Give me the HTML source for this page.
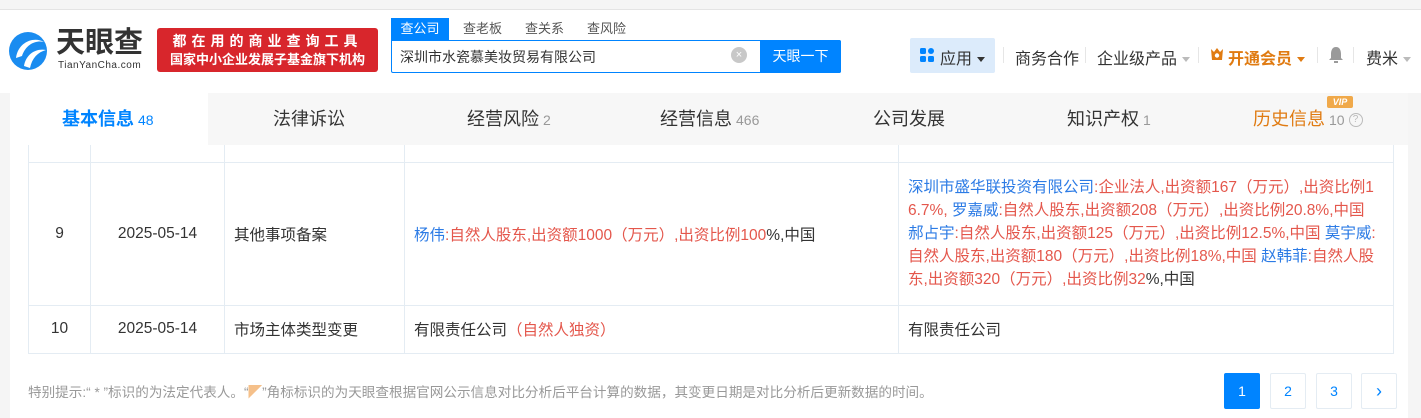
<!DOCTYPE html>
<html><head><meta charset="utf-8"><style>
*{margin:0;padding:0;box-sizing:border-box}
body{width:1421px;height:418px;overflow:hidden;background:#f5f5f5;font-family:"Liberation Sans","Noto Sans CJK SC",sans-serif;color:#333;position:relative}
.abs{position:absolute}
.hdr{left:0;top:9px;width:1421px;height:84px;background:#fff;border-top:1px solid #e4e4e4}
.card{left:10px;top:93px;width:1398px;height:325px;background:#fff}
.tabs{left:10px;top:93px;width:1398px;height:52px;background:#f7f7f7}
.tab{position:absolute;top:0;height:52px;line-height:52px;font-size:18px;color:#333;white-space:nowrap}
.tab small{font-size:14px;color:#999;margin-left:4px}
table{position:absolute;left:28px;top:145px;border-collapse:collapse;font-size:15.5px;color:#333}
td{border:1px solid #e4ecf3;vertical-align:middle}
.b{color:#2c7be5}
.r{color:#e4574c}
.pg{position:absolute;top:373px;width:36px;height:36px;border:1px solid #e4ecf3;border-radius:2px;text-align:center;line-height:34px;font-size:14px;color:#0084ff;background:#fff}
.nav{position:absolute;top:45px;font-size:16px;color:#333;white-space:nowrap}
.sep{position:absolute;top:47px;width:1px;height:16px;background:#e6e6e6}
.caret{display:inline-block;width:0;height:0;border-left:4px solid transparent;border-right:4px solid transparent;border-top:5px solid #999;vertical-align:middle;margin-left:5px}
</style></head><body>
<div class="abs hdr"></div>
<svg class="abs" style="left:8px;top:28px" width="42" height="46" viewBox="0 0 42 46">
<circle cx="20" cy="23" r="19" fill="#1a8cf0"/>
<path d="M8 30 C10 14 26 8 36 14 C28 12 18 16 14 28 Z" fill="#fff"/>
<path d="M16 38 C18 26 28 20 38 22 C30 24 24 30 22 40 Z" fill="#fff"/>
</svg>
<div class="abs" style="left:56px;top:27px;font-size:29px;font-weight:bold;color:#333;line-height:32px">天眼查</div>
<div class="abs" style="left:58px;top:60px;font-size:10px;color:#333;letter-spacing:.5px">TianYanCha.com</div>
<div class="abs" style="left:157px;top:28px;width:221px;height:44px;background:#d8262c;border-radius:3px;color:#fff;text-align:center">
<div style="font-size:14px;letter-spacing:5px;line-height:20px;margin-top:3px;font-weight:bold">都在用的商业查询工具</div>
<div style="font-size:13px;line-height:18px;font-weight:bold">国家中小企业发展子基金旗下机构</div></div>
<div class="abs" style="left:391px;top:18px;width:58px;height:22px;background:#0084ff;color:#fff;font-size:13px;text-align:center;line-height:22px">查公司</div>
<div class="abs" style="left:463px;top:18px;font-size:13px;color:#555;line-height:22px">查老板</div>
<div class="abs" style="left:525px;top:18px;font-size:13px;color:#555;line-height:22px">查关系</div>
<div class="abs" style="left:587px;top:18px;font-size:13px;color:#555;line-height:22px">查风险</div>
<div class="abs" style="left:391px;top:40px;width:450px;height:33px;border:1px solid #0084ff;background:#fff;border-radius:0 2px 2px 2px"></div>
<div class="abs" style="left:400px;top:47px;font-size:14px;color:#333">深圳市水瓷慕美妆贸易有限公司</div>
<div class="abs" style="left:731px;top:47px;width:16px;height:16px;border-radius:50%;background:#c8c8c8;color:#fff;font-size:11px;text-align:center;line-height:16px">×</div>
<div class="abs" style="left:760px;top:40px;width:81px;height:33px;background:#0084ff;color:#fff;font-size:14px;text-align:center;line-height:33px;border-radius:0 2px 2px 0">天眼一下</div>
<div class="abs" style="left:910px;top:38px;width:85px;height:35px;background:#dcebfb;border-radius:2px"></div>
<svg class="abs" style="left:920px;top:48px" width="14" height="14"><rect x="0" y="0" width="6" height="6" rx="1.5" fill="#0084ff"/><rect x="8" y="0" width="6" height="6" rx="3" fill="#0084ff"/><rect x="0" y="8" width="6" height="6" rx="1.5" fill="#0084ff"/><rect x="8" y="8" width="6" height="6" rx="1.5" fill="#0084ff"/></svg>
<div class="nav" style="left:940px">应用<span class="caret" style="border-top-color:#333"></span></div>
<div class="sep" style="left:1003px"></div>
<div class="nav" style="left:1015px">商务合作</div>
<div class="sep" style="left:1085px"></div>
<div class="nav" style="left:1097px">企业级产品<span class="caret" style="border-top-color:#bbb"></span></div>
<div class="sep" style="left:1198px"></div>
<svg class="abs" style="left:1210px;top:48px" width="14" height="13"><path d="M1 1 L4 4 L7 0 L10 4 L13 1 L12 12 L2 12 Z" fill="#e07b12"/><circle cx="7" cy="7.5" r="2.2" fill="#fff"/></svg>
<div class="nav" style="left:1228px;color:#e07b12;font-weight:bold">开通会员<span class="caret" style="border-top-color:#e07b12"></span></div>
<div class="sep" style="left:1317px"></div>
<svg class="abs" style="left:1329px;top:46px" width="14" height="18"><path d="M7 1 C3 1 2 5 2 8 L2 12 L0 14 L14 14 L12 12 L12 8 C12 5 11 1 7 1Z" fill="#9a9a9a"/><rect x="5" y="15" width="4" height="2" fill="#9a9a9a"/></svg>
<div class="sep" style="left:1353px"></div>
<div class="nav" style="left:1366px">费米<span class="caret" style="border-top-color:#bbb"></span></div>
<div class="abs card"></div>
<div class="abs tabs">
<div style="position:absolute;left:0;top:0;width:198px;height:52px;background:#fff"></div>
<div class="tab" style="left:52px;color:#0084ff;font-weight:bold">基本信息<small style="color:#0084ff;font-weight:normal">48</small></div>
<div class="tab" style="left:263px">法律诉讼</div>
<div class="tab" style="left:457px">经营风险<small>2</small></div>
<div class="tab" style="left:650px">经营信息<small>466</small></div>
<div class="tab" style="left:863px">公司发展</div>
<div class="tab" style="left:1057px">知识产权<small>1</small></div>
<div class="tab" style="left:1243px;color:#e07b12">历史信息<small>10</small><span style="display:inline-block;width:14px;height:14px;border:1px solid #bbb;border-radius:50%;font-size:10px;line-height:12px;text-align:center;color:#bbb;vertical-align:middle;margin-left:4px">?</span></div>
<div style="position:absolute;left:1317px;top:3px;width:26px;height:12px;background:#f0a94a;border-radius:2px;color:#fff;font-size:9px;font-weight:bold;font-style:italic;text-align:center;line-height:12px">VIP</div>
</div>
<table>
<tr style="height:17px"><td style="width:62px;border-top:none"></td><td style="width:134px;border-top:none"></td><td style="width:180px;border-top:none"></td><td style="width:494px;border-top:none"></td><td style="width:495px;border-top:none"></td></tr>
<tr style="height:143px"><td style="text-align:center">9</td><td style="text-align:center">2025-05-14</td><td style="padding-left:9px">其他事项备案</td>
<td style="padding-left:9px;white-space:nowrap"><span class="b">杨伟</span><span class="r">:自然人股东,出资额1000（万元）,出资比例100</span>%,中国</td>
<td style="padding:0 0 0 9px;line-height:23px;white-space:nowrap;overflow:hidden"><span class="b">深圳市盛华联投资有限公司</span><span class="r">:企业法人,出资额167（万元）,出资比例1</span><br><span class="r">6.7%,</span> <span class="b">罗嘉威</span><span class="r">:自然人股东,出资额208（万元）,出资比例20.8%,中国</span><br><span class="b">郝占宇</span><span class="r">:自然人股东,出资额125（万元）,出资比例12.5%,中国</span> <span class="b">莫宇威</span><span class="r">:</span><br><span class="r">自然人股东,出资额180（万元）,出资比例18%,中国</span> <span class="b">赵韩菲</span><span class="r">:自然人股</span><br><span class="r">东,出资额320（万元）,出资比例32</span>%,中国</td></tr>
<tr style="height:48px"><td style="text-align:center">10</td><td style="text-align:center">2025-05-14</td><td style="padding-left:9px">市场主体类型变更</td><td style="padding-left:9px">有限责任公司<span class="r">（自然人独资）</span></td><td style="padding-left:9px">有限责任公司</td></tr>
</table>
<div class="abs" style="left:28px;top:381px;font-size:13.6px;color:#999;white-space:nowrap">特别提示:“ * ”标识的为法定代表人。“<span style="color:#f5c08a">◤</span>”角标标识的为天眼查根据官网公示信息对比分析后平台计算的数据，其变更日期是对比分析后更新数据的时间。</div>
<div class="pg" style="left:1224px;background:#0084ff;color:#fff;border-color:#0084ff">1</div>
<div class="pg" style="left:1270px">2</div>
<div class="pg" style="left:1316px">3</div>
<div class="pg" style="left:1361px;font-size:18px">›</div>
</body></html>
